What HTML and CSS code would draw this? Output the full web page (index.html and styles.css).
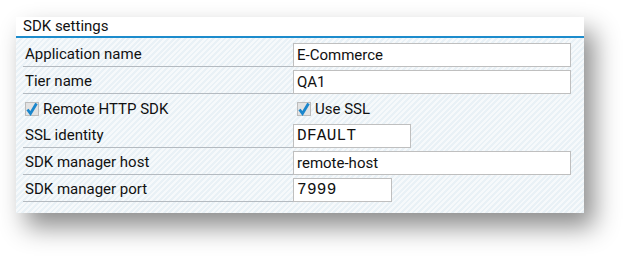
FILE: index.html
```html
<!DOCTYPE html>
<html lang="en">
<head>
    <meta charset="UTF-8">
    <title>SDK settings</title>
    <link rel="stylesheet" href="styles.css">
</head>
<body>

<div class="panel">
    <div class="panel-title">SDK settings</div>
    <div class="form">
        <div class="row">
            <div class="label">Application name</div>
            <div class="field wide">E-Commerce</div>
        </div>
        <div class="row">
            <div class="label">Tier name</div>
            <div class="field wide">QA1</div>
        </div>
        <div class="row">
            <div class="check-label">
                <svg class="check" width="14" height="14" viewBox="0 0 14 14">
                    <rect x="0.5" y="0.5" width="13" height="13" fill="#e2e2e2" stroke="#bcbcbc"/>
                    <path d="M2.5 7.5 L5.5 11.5 L11.5 1.5" fill="none" stroke="#1a86cc" stroke-width="2.8"/>
                </svg>
                Remote HTTP SDK
            </div>
            <div class="check-label">
                <svg class="check" width="14" height="14" viewBox="0 0 14 14">
                    <rect x="0.5" y="0.5" width="13" height="13" fill="#e2e2e2" stroke="#bcbcbc"/>
                    <path d="M2.5 7.5 L5.5 11.5 L11.5 1.5" fill="none" stroke="#1a86cc" stroke-width="2.8"/>
                </svg>
                Use SSL
            </div>
        </div>
        <div class="row">
            <div class="label">SSL identity</div>
            <div class="field mono identity">DFAULT</div>
        </div>
        <div class="row">
            <div class="label">SDK manager host</div>
            <div class="field wide">remote-host</div>
        </div>
        <div class="row">
            <div class="label">SDK manager port</div>
            <div class="field mono port">7999</div>
        </div>
    </div>
</div>

</body>
</html>
```

FILE: styles.css
```css
html, body {
    min-height: 100vh;
}
body {
    margin: 0;
    background: #ffffff;
    font-family: Roboto, "Liberation Sans", sans-serif;
    font-size: 15px;
    color: #111;
}
.panel {
    margin: 17px 0 0 16px;
    width: 568px;
    height: 196px;
    background: repeating-linear-gradient(135deg, #f6f9fb 0px, #f6f9fb 2px, #e9f1f6 2px, #e9f1f6 4px);
    box-shadow: 10px 14px 24px rgba(0, 0, 0, 0.45);
}
.panel-title {
    height: 19px;
    line-height: 19px;
    padding-left: 7px;
    background: #ffffff;
    border-bottom: 2px solid #1d8ccc;
}
.form {
    display: flex;
    flex-direction: column;
    gap: 3px;
    padding: 5px 0 0 7px;
}
.row {
    display: flex;
    height: 24px;
}
.label {
    box-sizing: border-box;
    width: 270px;
    height: 24px;
    line-height: 23px;
    padding-left: 2px;
    border-bottom: 1px solid #b4bac0;
}
.field {
    box-sizing: border-box;
    height: 24px;
    line-height: 22px;
    padding-left: 3px;
    background: #ffffff;
    border: 1px solid #bfbfbf;
}
.wide {
    width: 278px;
}
.identity {
    width: 118px;
}
.port {
    width: 99px;
}
.mono {
    font-family: "Liberation Mono", "Courier New", monospace;
    font-size: 16px;
    letter-spacing: 0.3px;
}
.check-label {
    display: flex;
    align-items: center;
    gap: 4px;
    width: 270px;
    padding-left: 2px;
}
.check {
    flex: none;
}
```
